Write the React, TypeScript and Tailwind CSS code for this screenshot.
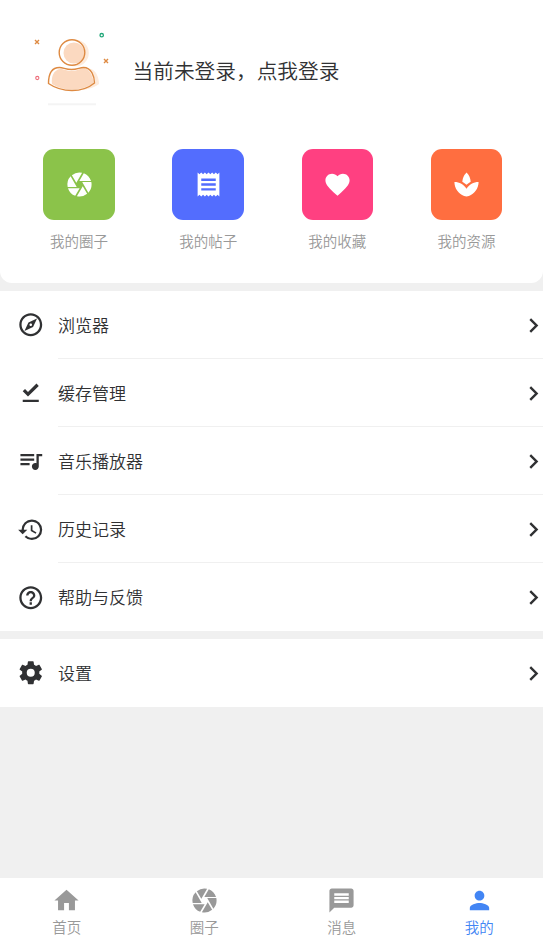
import type { IconType } from 'react-icons';
import {
  MdCamera,
  MdChevronRight,
  MdFavorite,
  MdHelpOutline,
  MdHistory,
  MdHome,
  MdMessage,
  MdOutlineDownloadDone,
  MdOutlineExplore,
  MdPerson,
  MdQueueMusic,
  MdReceipt,
  MdSpa,
} from 'react-icons/md';

interface Item {
  label: string;
  icon: IconType;
}

const CogIcon: IconType = ({ className }) => (
  <svg viewBox="0 0 24 24" fill="currentColor" className={className}>
    <path d="M12,15.5A3.5,3.5 0 0,1 8.5,12A3.5,3.5 0 0,1 12,8.5A3.5,3.5 0 0,1 15.5,12A3.5,3.5 0 0,1 12,15.5M19.43,12.97C19.47,12.65 19.5,12.33 19.5,12C19.5,11.67 19.47,11.34 19.43,11L21.54,9.37C21.73,9.22 21.78,8.95 21.66,8.73L19.66,5.27C19.54,5.05 19.27,4.96 19.05,5.05L16.56,6.05C16.04,5.66 15.5,5.32 14.87,5.07L14.5,2.42C14.46,2.18 14.25,2 14,2H10C9.75,2 9.54,2.18 9.5,2.42L9.13,5.07C8.5,5.32 7.96,5.66 7.44,6.05L4.95,5.05C4.73,4.96 4.46,5.05 4.34,5.27L2.34,8.73C2.21,8.95 2.27,9.22 2.46,9.37L4.57,11C4.53,11.34 4.5,11.67 4.5,12C4.5,12.33 4.53,12.65 4.57,12.97L2.46,14.63C2.27,14.78 2.21,15.05 2.34,15.27L4.34,18.73C4.46,18.95 4.73,19.03 4.95,18.95L7.44,17.94C7.96,18.34 8.5,18.68 9.13,18.93L9.5,21.58C9.54,21.82 9.75,22 10,22H14C14.25,22 14.46,21.82 14.5,21.58L14.87,18.93C15.5,18.67 16.04,18.34 16.56,17.94L19.05,18.95C19.27,19.03 19.54,18.95 19.66,18.73L21.66,15.27C21.78,15.05 21.73,14.78 21.54,14.63L19.43,12.97Z" />
  </svg>
);

const shortcuts: (Item & { color: string })[] = [
  { label: '我的圈子', icon: MdCamera, color: 'bg-[#8bc34a]' },
  { label: '我的帖子', icon: MdReceipt, color: 'bg-[#536dfe]' },
  { label: '我的收藏', icon: MdFavorite, color: 'bg-[#ff4081]' },
  { label: '我的资源', icon: MdSpa, color: 'bg-[#ff6e40]' },
];

const menu: Item[] = [
  { label: '浏览器', icon: MdOutlineExplore },
  { label: '缓存管理', icon: MdOutlineDownloadDone },
  { label: '音乐播放器', icon: MdQueueMusic },
  { label: '历史记录', icon: MdHistory },
  { label: '帮助与反馈', icon: MdHelpOutline },
];

const tabs: Item[] = [
  { label: '首页', icon: MdHome },
  { label: '圈子', icon: MdCamera },
  { label: '消息', icon: MdMessage },
  { label: '我的', icon: MdPerson },
];

function Avatar() {
  return (
    <svg width="110" height="95" viewBox="0 0 110 95" fill="none" className="shrink-0">
      <circle cx="55.5" cy="33" r="13.3" fill="#fdebdc" />
      <path d="M33 66c-2-11 1-18 8-18 4 0 6 2 14 2s11-2 16-1c6 2 8 10 8 15-6 4-12 6-22 6-9 0-18-1-24-4z" fill="#fdebdc" />
      <circle cx="52" cy="32.5" r="12.8" fill="#fff" />
      <circle cx="54" cy="33" r="10.5" fill="#fbd9c0" />
      <path d="M28.500 63.500c0-9 3-16 11-16 4 0 6 2 12 2s8-2 12-2c8 0 11 9 11 15.500-6 5-13 7.500-22.500 7.500s-17-2.500-23.500-7z" fill="#fff" />
      <path d="M32 64c-1-8 2-14 8-15 4 0 6 2 12 2s8-3 12-3c6 1 9.500 9 9.500 15-6 4-12 6.500-22 6.500-8 0-14.500-2-19.500-5.500z" fill="#fbd9c0" />
      <circle cx="52" cy="32.500" r="12.800" stroke="#de8a42" strokeWidth="1.400" />
      <path d="M28.500 63.500c0-9 3-16 11-16 4 0 6 2 12 2s8-2 12-2c8 0 11 9 11 15.500-6 5-13 7.500-22.500 7.500s-17-2.500-23.500-7z" stroke="#de8a42" strokeWidth="1.400" />
      <path d="M15 20l4 4m0-4l-4 4M84 39l4 4m0-4l-4 4" stroke="#de8a42" strokeWidth="1.400" />
      <circle cx="81.700" cy="15.200" r="1.700" stroke="#20a779" strokeWidth="1.300" />
      <circle cx="17.300" cy="58" r="1.600" stroke="#ed6f7c" strokeWidth="1.100" />
      <path d="M28 84.300h48" stroke="#f4f4f4" strokeWidth="2" />
    </svg>
  );
}

function MenuRow({ label, icon: Icon, divider }: Item & { divider?: boolean }) {
  return (
    <div className="flex h-[68.1px] items-center pl-[17px]">
      <Icon className="size-[27.5px] shrink-0 text-[#303133]" />
      <div
        className={`ml-[13.5px] flex h-full flex-1 items-center justify-between border-b ${divider ? 'border-[#f0f0f0]' : 'border-transparent'}`}
      >
        <span className="text-[17px] leading-6">{label}</span>
        <MdChevronRight className="-mr-[4.5px] mt-px size-[29px] shrink-0" />
      </div>
    </div>
  );
}

export default function App() {
  return (
    <div className="flex h-[942px] w-[543px] flex-col overflow-hidden bg-[#f0f0f0] font-['Noto_Sans_CJK_SC',sans-serif] font-[350] text-[#303133]">
      <header className="h-[283px] shrink-0 rounded-b-[12px] bg-white pt-5">
        <div className="flex h-[95px] pl-5">
          <Avatar />
          <span className="ml-[2.5px] mt-[35px] text-[20.7px] leading-[30px]">当前未登录，点我登录</span>
        </div>
        <div className="mt-[34px] grid grid-cols-4 pl-[14.5px] pr-[12px]">
          {shortcuts.map(({ label, icon: Icon, color }) => (
            <div key={label} className="flex flex-col items-center">
              <div className={`flex h-[71px] w-[71.5px] items-center justify-center rounded-[11px] ${color}`}>
                <Icon className="size-[29px] text-white" />
              </div>
              <span className="mt-[10px] text-[14.5px] leading-[21px] text-[#999]">{label}</span>
            </div>
          ))}
        </div>
      </header>

      <section className="mt-2 h-[340px] shrink-0 bg-white">
        {menu.map((item, i) => (
          <MenuRow key={item.label} {...item} divider={i < menu.length - 1} />
        ))}
      </section>
      <section className="mt-2 h-[68px] shrink-0 bg-white">
        <MenuRow label="设置" icon={CogIcon} />
      </section>

      <nav className="mt-auto flex h-[64px] shrink-0 bg-white">
        <div className="-ml-[2px] flex shrink-0">
          {tabs.map(({ label, icon: Icon }) => (
            <div
              key={label}
              className={`flex w-[137.5px] flex-col items-center pt-2 ${label === '我的' ? 'text-[#4285f4]' : 'text-[#999]'}`}
            >
              <Icon className="size-[29px]" />
              <span className="mt-px text-[14.5px] leading-[21px]">{label}</span>
            </div>
          ))}
        </div>
      </nav>
    </div>
  );
}
